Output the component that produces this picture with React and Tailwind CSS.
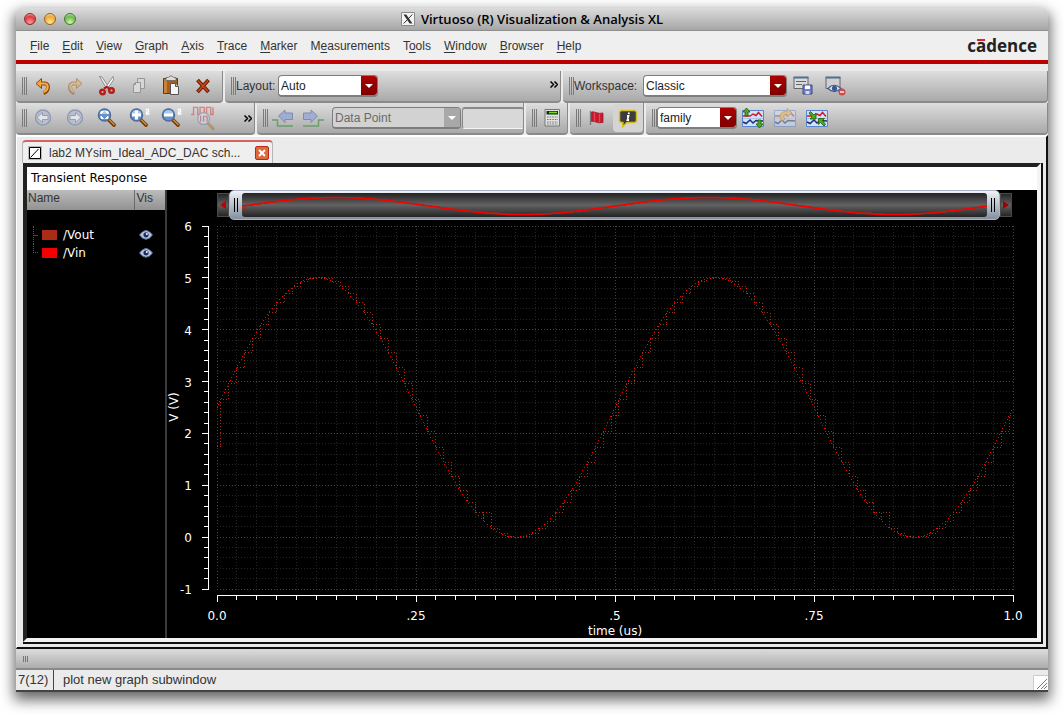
import clsx from 'clsx'

const MENUS = [
  ['', 'F', 'ile'],
  ['', 'E', 'dit'],
  ['', 'V', 'iew'],
  ['', 'G', 'raph'],
  ['', 'A', 'xis'],
  ['', 'T', 'race'],
  ['', 'M', 'arker'],
  ['M', 'e', 'asurements'],
  ['T', 'o', 'ols'],
  ['', 'W', 'indow'],
  ['', 'B', 'rowser'],
  ['', 'H', 'elp'],
]

const TRACES = [
  { name: '/Vout', color: '#ac2b17' },
  { name: '/Vin', color: '#f40000' },
]

// plot box inside the graph's own coordinates
const PLOT = { left: 50, right: 846, top: 6, bottom: 369, vMax: 6, vMin: -1 }
const PERIOD = 0.01
const FIRST_SAMPLE = 0.005

const toX = (t) => PLOT.left + t * (PLOT.right - PLOT.left)
const toY = (v) => PLOT.top + ((PLOT.vMax - v) * (PLOT.bottom - PLOT.top)) / (PLOT.vMax - PLOT.vMin)
const vin = (t) => 2.5 + 2.5 * Math.sin(4 * Math.PI * t)

function vinPoints() {
  const points = []
  for (let i = 0; i <= 400; i++) points.push([i / 400, vin(i / 400)])
  return points
}

// sample and hold output; the converter glitches at samples 33 and 83
function voutPoints() {
  const points = [[0, 1.75], [FIRST_SAMPLE, 1.75]]
  for (let k = 0; k < 100; k++) {
    const t = FIRST_SAMPLE + k * PERIOD
    const end = Math.min(t + PERIOD, 1)
    const glitch = k === 33 || k === 83
    const held = glitch ? vin(t - PERIOD) : vin(t)
    if (glitch) points.push([t, vin(t)])
    points.push([t, held], [end, held])
  }
  return points
}

// one pixel out of three along the line
function dots(points) {
  let d = ''
  let step = 0
  let prev = null
  points.forEach(([t, v]) => {
    const x = toX(t)
    const y = toY(v)
    if (prev) {
      const n = Math.max(Math.abs(x - prev[0]), Math.abs(y - prev[1]))
      let s = step
      while (s < n) {
        const px = Math.floor(prev[0] + ((x - prev[0]) * s) / n)
        const py = Math.floor(prev[1] + ((y - prev[1]) * s) / n)
        d += `M${px} ${py + 0.5}h1`
        s += 3
      }
      step = s - n
    }
    prev = [x, y]
  })
  return d
}

const overviewPath = (points) =>
  points.map(([t, v], i) => `${i ? 'L' : 'M'}${(t * 747).toFixed(1)} ${(13 - (v - 2.5) * 3.4).toFixed(1)}`).join('')

const VIN = vinPoints()
const VOUT = voutPoints()
const X_TICKS = Array.from({ length: 41 }, (_, i) => ({ x: Math.floor(toX(i / 40)) + 0.5, major: i % 10 === 0 }))
const Y_TICKS = Array.from({ length: 36 }, (_, i) => ({ y: Math.floor(toY(6 - i / 5)) + 0.5, major: i % 5 === 0 }))
const X_LABELS = ['0.0', '.25', '.5', '.75', '1.0']

function Icon({ children, faded, size = 22 }) {
  return (
    <svg width={size} height={size} viewBox="0 0 22 22" fill="none" className={clsx('shrink-0', faded && 'opacity-45')}>
      {children}
    </svg>
  )
}

function UndoShape() {
  return (
    <>
      <path d="M7 8.5h6c4 0 4.5 7.500-1.500 9.500" stroke="#8f4a08" strokeWidth="4" />
      <path d="M9.500 3.500 4 8.500l5.500 5z" fill="#f0a33a" stroke="#8f4a08" strokeLinejoin="round" />
      <path d="M8 8.500h5c3.500 0 4 6.500-1.500 8.500" stroke="#f3ab4b" strokeWidth="2.200" />
    </>
  )
}

const UndoIcon = () => <Icon><UndoShape /></Icon>
const RedoIcon = () => <Icon faded><g transform="matrix(-1 0 0 1 22 0)"><UndoShape /></g></Icon>

const CutIcon = () => (
  <Icon>
    <path d="M3.500 1.500 11.500 15l2-1.500L6 2z" fill="#f3f3f3" stroke="#777" strokeWidth=".8" />
    <path d="M17 1.500 8.500 14l1.500 1.500L17.500 5z" fill="#fafafa" stroke="#777" strokeWidth=".8" />
    <path d="M8 13.500 11 12l3 2" stroke="#b01814" strokeWidth="2" />
    <circle cx="6.500" cy="17" r="2.300" stroke="#b81c18" strokeWidth="2.400" />
    <circle cx="15.500" cy="15.500" r="2.300" stroke="#b81c18" strokeWidth="2.400" />
  </Icon>
)

const CopyIcon = () => (
  <Icon>
    <path d="M9.500 3.500h7v10h-7z" fill="#d6d6d6" stroke="#969696" />
    <path d="M7.500 7.500 5.500 9.500v8h7v-10z" fill="#d9d9d9" stroke="#969696" />
    <path d="M5.500 9.500h2v-2" stroke="#969696" />
  </Icon>
)

const PasteIcon = () => (
  <Icon>
    <path d="M3.500 3.500h14v15h-14z" fill="#a65d18" stroke="#6c3705" />
    <path d="M4 4h3v14H4z" fill="#c98339" />
    <path d="M6 2.500h2.500L10 1h2l1.500 1.500H16v3H6z" fill="#dcdcdc" stroke="#666" strokeWidth=".8" />
    <path d="M10.500 8.500h5l3 3v8h-8z" fill="#f4f4f4" stroke="#555" />
    <path d="M15.500 8.500v3h3" fill="#ccc" stroke="#555" />
  </Icon>
)

const DeleteIcon = () => (
  <Icon>
    <path d="m5.500 5 11 12M16.500 5l-11 12" stroke="#6d1f00" strokeWidth="3.800" />
    <path d="m6 5.500 10 11M16 5.500l-10 11" stroke="#c8481c" strokeWidth="1.600" />
  </Icon>
)

const NavIcon = ({ flip }) => (
  <Icon>
    <g transform={flip ? 'matrix(-1 0 0 1 22 0)' : undefined}>
      <circle cx="11" cy="10.500" r="7.500" fill="#b9bfcf" stroke="#919bb3" strokeWidth="1.500" />
      <path d="m5 10.500 5.500-5v3H16v4h-5.500v3z" fill="#e3e4e8" stroke="#8791ab" strokeWidth=".8" />
    </g>
  </Icon>
)

function Lens({ children }) {
  return (
    <>
      <path d="m13 13 5 5" stroke="#6b3a08" strokeWidth="3.800" strokeLinecap="round" />
      <path d="m13.500 13 4.500 4.500" stroke="#e08a2d" strokeWidth="1.500" strokeLinecap="round" />
      <circle cx="8.500" cy="8" r="6" fill="#6593cc" stroke="#4c6c98" strokeWidth="1.500" />
      <path d="M3.500 7a5.100 5.100 0 0 1 10 0z" fill="#a9c8ec" />
      {children}
    </>
  )
}

const ZoomFitIcon = () => (
  <Icon>
    <Lens>
      <path d="M5 4.500h2.500L5 7zM12 4.500H9.500L12 7zM5 11.500h2.500L5 9zM12 11.500H9.500L12 9z" fill="#fff" stroke="#fff" />
    </Lens>
  </Icon>
)

const ZoomStepIcon = ({ out }) => (
  <Icon>
    <Lens>
      <path d={out ? 'M4 8h9' : 'M4 8h9M8.500 3.500v9'} stroke="#fff" strokeWidth="3" />
    </Lens>
    <path d="M17.500 2.500h3v2.500h-2v2h3" stroke="#fff" strokeWidth="1.300" />
  </Icon>
)

const ZoomWaveIcon = () => (
  <Icon faded size={26}>
    <path d="M1 8h2V2h3.500v6h2V2H12v6h2V2h3.500v6h2V2" stroke="#d02a2a" strokeWidth="1.200" />
    <path d="m15 15.500 4.500 4.500" stroke="#b26a1c" strokeWidth="2.500" strokeLinecap="round" />
    <circle cx="11.500" cy="11.500" r="5" fill="#d8e0f0" stroke="#5e779f" />
    <path d="M9 9v5M11.500 14V9.500h3V14" stroke="#c22a4a" />
  </Icon>
)

const EdgeIcon = ({ flip }) => (
  <Icon>
    <g transform={flip ? 'matrix(-1 0 0 1 22 0)' : undefined}>
      <path d="M0 13h5.500v6H21" stroke="#67a069" strokeWidth="1.500" />
      <path d="M6.500 9 13 3v3h7.500v6.500H13v3z" fill="#a0acd2" stroke="#808bb0" />
    </g>
  </Icon>
)

const CalculatorIcon = () => (
  <Icon>
    <path d="M4 2.500h14.500v16.500H4z" fill="#e2e2e2" stroke="#777" />
    <path d="M5.500 4h11.500v3.500H5.500z" fill="#14300a" />
    <path d="M8 5.500h8" stroke="#6fe01c" strokeWidth="1.500" />
    <path d="M6 10h11M6 12.500h11M6 15h11M6 17h11" stroke="#777" strokeWidth="1.200" strokeDasharray="1.600 1" />
  </Icon>
)

const FlagIcon = () => (
  <Icon>
    <path d="M4.500 4v14" stroke="#777" strokeWidth="1.300" />
    <path d="M5.500 5c3-1 6 2.500 11.500 1v9.500c-5.500 1.500-8.500-2-11.500-1z" fill="#c8182a" stroke="#9a2030" strokeWidth=".8" />
    <path d="M8.500 5.500v9M13.500 7v8.500" stroke="#dd4a56" strokeWidth="1.300" />
  </Icon>
)

const InfoIcon = () => (
  <Icon>
    <path d="M4 3.500h14l1.500 1.500v9L18 15.500h-8L5.500 20l.5-4.500H4L2.500 14V5z" fill="#3c3c3c" stroke="#d4c01c" strokeWidth="1.500" strokeLinejoin="round" />
    <path d="M12 5.500 11.700 7.200M10 9h1.500l-1 4h1.500" stroke="#fff" strokeWidth="1.800" />
  </Icon>
)

const SaveWorkspaceIcon = () => (
  <Icon>
    <path d="M2 2.500h14v11H2z" fill="#dadada" stroke="#666" />
    <path d="M1.500 2.500h15" stroke="#4f6f8f" strokeWidth="2" />
    <path d="M4 6.500h10M4 9.500h6" stroke="#666" />
    <path d="M11 10h9v9h-9z" fill="#6f7fc4" stroke="#3c4a86" />
    <path d="M13 10.500h5v3.500h-5z" fill="#fff" />
    <path d="M13.500 16h4v3h-4z" fill="#d5daf0" />
  </Icon>
)

const HideWorkspaceIcon = () => (
  <Icon>
    <path d="M2 2.500h14v11H2z" fill="#cfcfcf" stroke="#666" />
    <path d="M1.500 2.500h15" stroke="#4f6f8f" strokeWidth="2" />
    <path d="M4 13.500q6-6.500 13 0-7 6-13 0z" fill="#dfe8f5" stroke="#3f5a88" strokeWidth="1.200" />
    <circle cx="10.500" cy="13.300" r="2.600" fill="#39588f" />
    <circle cx="18" cy="17" r="3.500" fill="#cf4a48" />
    <path d="M16 17h4" stroke="#fff" strokeWidth="1.400" />
  </Icon>
)

function StripBase() {
  return (
    <>
      <path d="M.5 3.500h21v16H.5z" fill="#cfe2fb" stroke="#5b82cf" />
      <path d="M1 11.500h20" stroke="#a9c6f0" />
      <path d="M1 9h7l3-2 3 1.500 2.500-3 3.500 4" stroke="#d01a2a" strokeWidth="1.500" />
      <path d="m1 15 3 1.500L8 13l3 3 3-2.500 7 .5" stroke="#1c2f6e" strokeWidth="1.500" />
    </>
  )
}

const SplitStripsIcon = () => (
  <Icon>
    <StripBase />
    <path d="M4.500 1 8 5H6v4H3V5H1zM17.500 21 14 17h2v-4h3v4h2z" fill="#4fa821" stroke="#1f5a08" strokeWidth=".8" />
  </Icon>
)

const RestoreStripsIcon = () => (
  <Icon faded>
    <StripBase />
    <path d="M8 14c-5-5 0-11 5-9V1.500l5 4.500-5 4V7.500c-3-.5-4.500 2-1.500 4.500z" fill="#f2b24a" stroke="#a9660f" strokeWidth=".8" />
  </Icon>
)

const CombineStripsIcon = () => (
  <Icon>
    <StripBase />
    <path d="m3 6 1.500-1.500L8 8l2-2v6H4l2-2zM19.500 17.500 18 19l-3.500-3.500-2 2v-6h6l-2 2z" fill="#4fa821" stroke="#1f5a08" strokeWidth=".8" />
  </Icon>
)

const EyeIcon = () => (
  <svg width="14" height="10" viewBox="0 0 14 10">
    <path d="M.5 5q6.500-9 13 0-6.500 8.500-13 0z" fill="#b9c6e2" stroke="#5c6f9c" />
    <circle cx="7" cy="4.800" r="2.600" fill="#1c2f5c" />
    <circle cx="7.800" cy="4" r="1" fill="#fff" />
  </svg>
)

function Grip() {
  return <div className="h-[18px] w-[5px] shrink-0 border-x border-[#7b7b7b] bg-[linear-gradient(90deg,transparent_1px,#7b7b7b_1px,#7b7b7b_2px,transparent_2px)]" />
}

function Toolbar({ label, className, children }) {
  return (
    <div
      role="toolbar"
      aria-label={label}
      className={clsx(
        'flex h-8 items-center rounded-b-[4px] border-r border-b-2 border-[#8a8a8a] bg-linear-to-b from-[#dedede] to-[#a9a9a9] pl-[6px]',
        className,
      )}
    >
      <Grip />
      {children}
    </div>
  )
}

function ToolButton({ label, pressed, narrow, children }) {
  return (
    <button
      aria-label={label}
      aria-pressed={pressed}
      className={clsx(
        'flex h-7 shrink-0 items-center justify-center',
        narrow || pressed ? 'w-[30px]' : 'w-8',
        pressed && 'rounded-[4px] bg-[#d4d4d4]',
      )}
    >
      {children}
    </button>
  )
}

function Combo({ label, value, disabled, className }) {
  return (
    <div className={clsx('relative h-[22px] shrink-0', className)}>
      <select
        aria-label={label}
        disabled={disabled}
        className={clsx(
          'h-full w-full appearance-none rounded-[4px] border border-b-2 border-[#7d7d7d] pl-[2px] text-[12px] leading-[18px] opacity-100',
          disabled ? 'bg-[#d2d2d2] text-[#6a6a6a]' : 'bg-white text-[#222]',
        )}
      >
        <option>{value}</option>
      </select>
      <span
        className={clsx(
          'pointer-events-none absolute top-px right-px bottom-[2px] flex w-4 items-center justify-center rounded-r-[3px]',
          disabled ? 'bg-[#a8a8a8]' : 'bg-linear-to-b from-[#b00000] to-[#7c0000]',
        )}
      >
        <svg width="8" height="4" viewBox="0 0 8 4"><path d="M0 0h8L4 4z" fill="#fff" /></svg>
      </span>
    </div>
  )
}

function More({ className }) {
  return (
    <button aria-label="More tools" className={clsx('w-[10px] shrink-0', className)}>
      <svg width="8" height="7" viewBox="0 0 8 7" fill="none">
        <path d="m.5.5 3 3-3 3M4.500.5l3 3-3 3" stroke="#000" strokeWidth="1.500" />
      </svg>
    </button>
  )
}

function TitleBar() {
  return (
    <header className="relative flex h-[23px] items-center justify-center rounded-t-[5px] border-b border-[#8e8e8e] bg-linear-to-b from-[#dcdcdc] to-[#a6a6a6]">
      <div className="absolute left-2 flex gap-2">
        <button aria-label="Close" className="h-3 w-3 rounded-full border border-[#8a2a2c] bg-[radial-gradient(circle_at_50%_85%,#ff9c98,#e0383d_60%,#f6c0c0)]" />
        <button aria-label="Minimize" className="h-3 w-3 rounded-full border border-[#94641c] bg-[radial-gradient(circle_at_50%_85%,#ffe890,#f0a838_60%,#fbe4b8)]" />
        <button aria-label="Zoom" className="h-3 w-3 rounded-full border border-[#3f7a2c] bg-[radial-gradient(circle_at_50%_85%,#d4f8a0,#6cb850_60%,#d2efc4)]" />
      </div>
      <svg width="14" height="14" viewBox="0 0 14 14" className="mr-[6px]">
        <path d="M.5.5h13v13H.5z" fill="#f4f4f4" stroke="#8a8a8a" />
        <path d="M2.500 2.500h2.800l6.200 9H8.700z" fill="#333" />
        <path d="M11.300 2.500 2.700 11.500" stroke="#333" />
      </svg>
      <h1 className="font-['Open_Sans','Noto_Sans',sans-serif] text-[13px] leading-[22px] font-semibold text-black">
        Virtuoso (R) Visualization &amp; Analysis XL
      </h1>
    </header>
  )
}

function MenuBar() {
  return (
    <nav className="flex h-[33px] items-center justify-between border-b-4 border-[#bc0000] bg-[#efefef] pr-[11px] pl-[14px]">
      <div className="flex gap-[13px]">
        {MENUS.map(([before, key, after]) => (
          <button key={before + key + after} className="leading-[16px]">
            {before}
            <span className="underline underline-offset-2">{key}</span>
            {after}
          </button>
        ))}
      </div>
      <div className="font-['Open_Sans','Noto_Sans',sans-serif] text-[17px] leading-[24px] font-bold text-[#222]">
        c
        <span className="relative">
          ā<span className="absolute top-[5px] left-[1px] h-[2px] w-2 bg-[#e0202c]" />
        </span>
        dence
      </div>
    </nav>
  )
}

function Toolbars() {
  return (
    <div className="bg-[#ebebeb] pt-[7px]">
      <div className="flex gap-[2px]">
        <Toolbar label="Edit" className="w-[207px]">
          <ToolButton label="Undo"><UndoIcon /></ToolButton>
          <ToolButton label="Redo"><RedoIcon /></ToolButton>
          <ToolButton label="Cut"><CutIcon /></ToolButton>
          <ToolButton label="Copy"><CopyIcon /></ToolButton>
          <ToolButton label="Paste"><PasteIcon /></ToolButton>
          <ToolButton label="Delete"><DeleteIcon /></ToolButton>
        </Toolbar>
        <Toolbar label="Layout" className="w-[336px]">
          <span className="w-[42px]">Layout:</span>
          <Combo label="Layout" value="Auto" className="w-[100px]" />
          <div className="flex-1" />
          <More className="mb-1" />
        </Toolbar>
        <Toolbar label="Workspace" className="flex-1">
          <span className="w-[69px]">Workspace:</span>
          <Combo label="Workspace" value="Classic" className="w-[144px]" />
          <ToolButton label="Save workspace"><SaveWorkspaceIcon /></ToolButton>
          <ToolButton label="Hide workspace"><HideWorkspaceIcon /></ToolButton>
        </Toolbar>
      </div>
      <div className="flex gap-[2px]">
        <Toolbar label="Zoom" className="w-[239px]">
          <ToolButton label="Back"><NavIcon /></ToolButton>
          <ToolButton label="Forward"><NavIcon flip /></ToolButton>
          <ToolButton label="Fit"><ZoomFitIcon /></ToolButton>
          <ToolButton label="Zoom in"><ZoomStepIcon /></ToolButton>
          <ToolButton label="Zoom out"><ZoomStepIcon out /></ToolButton>
          <ToolButton label="Zoom trace"><ZoomWaveIcon /></ToolButton>
          <div className="flex-1" />
          <More />
        </Toolbar>
        <Toolbar label="Find" className="w-[267px]">
          <ToolButton label="Previous edge" narrow><EdgeIcon /></ToolButton>
          <ToolButton label="Next edge" narrow><EdgeIcon flip /></ToolButton>
          <Combo label="Find by" value="Data Point" disabled className="ml-1 w-[129px]" />
          <input aria-label="Value" disabled className="ml-px h-[22px] w-[62px] rounded-[3px] border border-t-2 border-[#8a8a8a] border-b-[#f4f4f4] bg-[#d8d8d8]" />
        </Toolbar>
        <Toolbar label="Calculator" className="w-[42px]">
          <ToolButton label="Calculator" narrow><CalculatorIcon /></ToolButton>
        </Toolbar>
        <Toolbar label="Labels" className="w-[74px]">
          <ToolButton label="Flag"><FlagIcon /></ToolButton>
          <ToolButton label="Trace information" pressed><InfoIcon /></ToolButton>
        </Toolbar>
        <Toolbar label="Strips" className="flex-1">
          <Combo label="Group by" value="family" className="w-[80px]" />
          <ToolButton label="Split strips"><SplitStripsIcon /></ToolButton>
          <ToolButton label="Restore strips"><RestoreStripsIcon /></ToolButton>
          <ToolButton label="Combine strips"><CombineStripsIcon /></ToolButton>
        </Toolbar>
      </div>
    </div>
  )
}

function GraphTab() {
  return (
    <div className="flex h-[26px] items-end">
      <div className="-ml-px flex h-[23px] items-center rounded-t-[4px] border-x border-t-2 border-[#b5b5b5] border-t-[#d26464] bg-[#efefef] pr-[3px] pl-[5px]">
        <svg width="14" height="14" viewBox="0 0 14 14" className="mr-[7px]">
          <path d="M1 1h12v12H1z" fill="#fff" stroke="#bbb" strokeWidth="2" />
          <path d="M1.500 1.500h11v11h-11zM2.500 11.500 10.500 3" fill="none" stroke="#000" />
        </svg>
        <span className="w-[206px] leading-[16px]">lab2 MYsim_Ideal_ADC_DAC sch...</span>
        <button aria-label="Close tab" className="flex h-[14px] w-[14px] items-center justify-center rounded-[2px] border border-[#c0281c] bg-[#dc6a3c]">
          <svg width="8" height="8" viewBox="0 0 8 8"><path d="m1 1 6 6M7 1 1 7" stroke="#fff" strokeWidth="2" /></svg>
        </button>
      </div>
    </div>
  )
}

function Legend() {
  return (
    <div className="w-[140px] shrink-0 border-r-2 border-[#3a3a3a]">
      <table className="w-full table-fixed border-collapse">
        <thead>
          <tr className="h-5 bg-linear-to-b from-[#bcbcbc] to-[#929292] text-left align-top text-[#333]">
            <th className="w-[107px] border-r border-[#6b6b6b] pl-px leading-[16px] font-normal">Name</th>
            <th className="pl-[2px] leading-[16px] font-normal">Vis</th>
          </tr>
        </thead>
        <tbody className="font-['DejaVu_Sans',sans-serif] text-white before:block before:h-4">
          {TRACES.map((trace, i) => (
            <tr key={trace.name} className="h-[18px]">
              <td className="pl-[6px]">
                <div className="flex items-center">
                  <span
                    className={clsx(
                      'mr-[4px] w-[5px] border-l border-dotted border-[#555]',
                      i === 0 ? 'h-[18px] bg-[linear-gradient(#444,#444)] bg-[length:100%_1px] bg-center bg-no-repeat' : 'h-[9px] self-start border-b',
                    )}
                  />
                  <span className="mr-[6px] h-[10px] w-[15px]" style={{ background: trace.color }} />
                  <span className="leading-[18px]">{trace.name}</span>
                </div>
              </td>
              <td className="pl-[5px]">
                <button aria-label={`Show ${trace.name}`} className="flex"><EyeIcon /></button>
              </td>
            </tr>
          ))}
        </tbody>
      </table>
    </div>
  )
}

function Overview() {
  const arrow = 'mt-[3px] flex h-6 w-3 items-center justify-center border border-[#4a4a4a] bg-linear-to-b from-[#262626] via-[#626262] to-[#262626]'
  const handle = 'flex w-3 items-center justify-center gap-[2px]'
  const bar = <span className="h-[14px] w-px bg-black" />
  return (
    <div className="flex h-[30px] items-start pr-[25px] pl-[50px]">
      <button aria-label="Pan left" className={arrow}>
        <svg width="6" height="8" viewBox="0 0 6 8"><path d="M6 0v8L0 4z" fill="#c00000" /></svg>
      </button>
      <div className="flex h-[30px] min-w-0 flex-1 rounded-[5px] border border-[#aab4c4] bg-linear-to-b from-[#f0f3f8] to-[#8490a0]">
        <div className={handle}>{bar}{bar}</div>
        <div className="mt-[2px] h-6 min-w-0 flex-1 rounded-[3px] bg-linear-to-b from-[#242424] via-[#636363] to-[#242424]">
          <svg viewBox="0 0 747 24" preserveAspectRatio="none" className="h-full w-full" fill="none">
            <path d={overviewPath(VOUT)} stroke="#ac2b17" />
            <path d={overviewPath(VIN)} stroke="#f40000" strokeWidth="1.500" />
          </svg>
        </div>
        <div className={handle}>{bar}{bar}</div>
      </div>
      <button aria-label="Pan right" className={arrow}>
        <svg width="6" height="8" viewBox="0 0 6 8"><path d="M0 0v8l6-4z" fill="#a00000" /></svg>
      </button>
    </div>
  )
}

function Graph() {
  return (
    <svg viewBox="0 0 870 418" fill="none" className="block w-full font-['DejaVu_Sans',sans-serif] text-[12px]">
      <g shapeRendering="crispEdges">
        {X_TICKS.map(({ x, major }) => (
          <path key={x} d={`M${x} 6V370`} stroke={major ? '#444' : '#242424'} strokeDasharray="1 2" />
        ))}
        {Y_TICKS.map(({ y, major }) => (
          <path key={y} d={`M50 ${y}H847`} stroke={major ? '#444' : '#242424'} strokeDasharray="1 2" />
        ))}
        <path d={dots(VOUT)} stroke="#ac2b17" />
        <path d={dots(VIN)} stroke="#f40000" />
        <path d="M41.500 6V370M50 375.500H847" stroke="#fff" />
        {X_TICKS.map(({ x, major }) => (
          <path key={x} d={`M${x} 376v${major ? 6 : 4}`} stroke="#fff" />
        ))}
        {Y_TICKS.map(({ y, major }) => (
          <path key={y} d={`M41 ${y}h${major ? -6 : -4}`} stroke="#fff" />
        ))}
      </g>
      <g fill="#fff">
        {X_LABELS.map((label, i) => (
          <text key={label} x={toX(i / 4)} y="400" textAnchor="middle">{label}</text>
        ))}
        {[6, 5, 4, 3, 2, 1, 0, -1].map((v) => (
          <text key={v} x="25" y={toY(v) + 5} textAnchor="end">{v}</text>
        ))}
        <text x="448" y="415" textAnchor="middle">time (us)</text>
        <text transform="translate(11 187) rotate(-90)" textAnchor="middle">V (V)</text>
      </g>
    </svg>
  )
}

export default function App() {
  return (
    <div className="min-h-screen overflow-hidden bg-white px-4 pt-2 pb-6 font-['Liberation_Sans',Arial,sans-serif] text-[12px] text-[#333]">
      <div className="rounded-t-[5px] shadow-[0_6px_14px_2px_rgba(0,0,0,0.6)]">
        <TitleBar />
        <MenuBar />
        <Toolbars />
        <main className="border-t-2 border-r-2 border-b-2 border-l border-t-white border-r-[#111] border-b-[#111] border-l-white bg-[#ebebeb] pr-[3px] pb-[3px] pl-[6px]">
          <GraphTab />
          <div className="border-r-2 border-b-2 border-[#111]">
            <div className="border-4 border-t-[#222] border-r-[#f4f4f4] border-b-[#f4f4f4] border-l-[#222] bg-black">
              <h2 className="h-[23px] bg-white pl-1 font-['DejaVu_Sans',sans-serif] leading-[23px] text-black">Transient Response</h2>
              <div className="flex">
                <Legend />
                <div className="min-w-0 flex-1">
                  <Overview />
                  <Graph />
                </div>
              </div>
            </div>
          </div>
        </main>
        <div className="flex h-[21px] items-center border-b-2 border-[#8a8a8a] bg-linear-to-b from-[#dcdcdc] to-[#adadad] pl-[7px]">
          <svg width="6" height="6" viewBox="0 0 6 6"><path d="M.5 0v6M2.500 0v6M4.500 0v6" stroke="#777" /></svg>
        </div>
        <footer className="flex h-[22px] items-stretch border-b-2 border-[#444] bg-[#ebebeb] text-[13px] leading-[20px]">
          <span className="w-[38px] border-r border-[#444] pl-[2px]">7(12)</span>
          <span className="flex-1 pl-[9px]">plot new graph subwindow</span>
          <svg width="15" height="15" viewBox="0 0 15 15" className="self-end bg-white">
            <path d="M.5 15V.5H15" fill="none" stroke="#ccc" />
            <path d="M4 14 14 4M8 14l6-6M11 14l3-3" stroke="#777" />
          </svg>
        </footer>
      </div>
    </div>
  )
}
